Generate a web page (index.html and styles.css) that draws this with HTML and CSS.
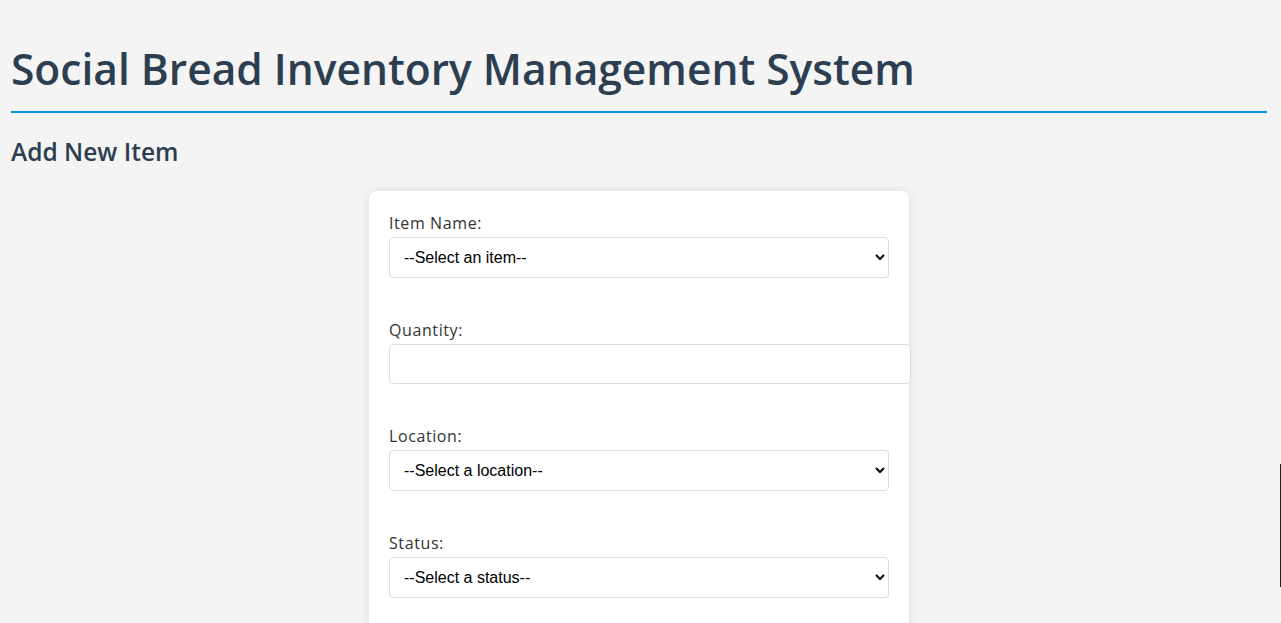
FILE: index.html
```html
<!DOCTYPE html>
<html lang="en">
<head>
<meta charset="utf-8">
<title>Social Bread Inventory Management System</title>
<link rel="stylesheet" href="styles.css">
</head>
<body>
<div class="container">
  <h1 class="title">Social Bread Inventory Management System</h1>
  <h2 class="subtitle">Add New Item</h2>
  <form class="card">
    <div class="group">
      <label class="label" for="item">Item Name:</label>
      <select class="select" id="item"><option>--Select an item--</option></select>
    </div>
    <div class="group">
      <label class="label" for="qty">Quantity:</label>
      <input class="input" id="qty" type="number">
    </div>
    <div class="group">
      <label class="label" for="loc">Location:</label>
      <select class="select" id="loc"><option>--Select a location--</option></select>
    </div>
    <div class="group">
      <label class="label" for="status">Status:</label>
      <select class="select" id="status"><option>--Select a status--</option></select>
    </div>
  </form>
</div>
<div class="edge-mark"></div>
</body>
</html>
```
FILE: styles.css
```css
html, body {
  margin: 0;
  padding: 0;
  background: #f4f4f4;
  overflow: hidden;
}
body {
  font-family: "Open Sans", "Liberation Sans", sans-serif;
  color: #333;
}
.container {
  padding: 0 14px 0 11px;
}
.title {
  margin: 0;
  padding: 44px 0 17px;
  font-size: 42.5px;
  font-weight: 600;
  line-height: 50px;
  color: #2c3e50;
  border-bottom: 2px solid #0096d6;
}
.subtitle {
  margin: 24px 0 24px;
  font-size: 24.5px;
  font-weight: 600;
  line-height: 30px;
  color: #2c3e50;
}
.card {
  width: 540px;
  box-sizing: border-box;
  margin: 0 auto;
  padding: 20px;
  background: #fff;
  border-radius: 8px;
  box-shadow: 0 0 10px rgba(0,0,0,0.1);
  height: 500px;
}
.group {
  margin-bottom: 40px;
}
.label {
  display: block;
  font-size: 16px;
  letter-spacing: 0.6px;
  line-height: 24px;
  margin-bottom: 2px;
  color: #333;
}
.select, .input {
  display: block;
  width: 100%;
  padding: 10px;
  font-family: Arial, "Liberation Sans", sans-serif;
  font-size: 16px;
  border: 1px solid #ddd;
  border-radius: 4px;
  background: #fff;
  color: #000;
}
.select {
  box-sizing: border-box;
  height: 41px;
}
.input {
  height: 40px;
  box-sizing: border-box;
  width: 522px;
}
.edge-mark {
  position: fixed;
  right: 0;
  top: 464px;
  width: 1px;
  height: 123px;
  background: #1e1e1e;
}
```
